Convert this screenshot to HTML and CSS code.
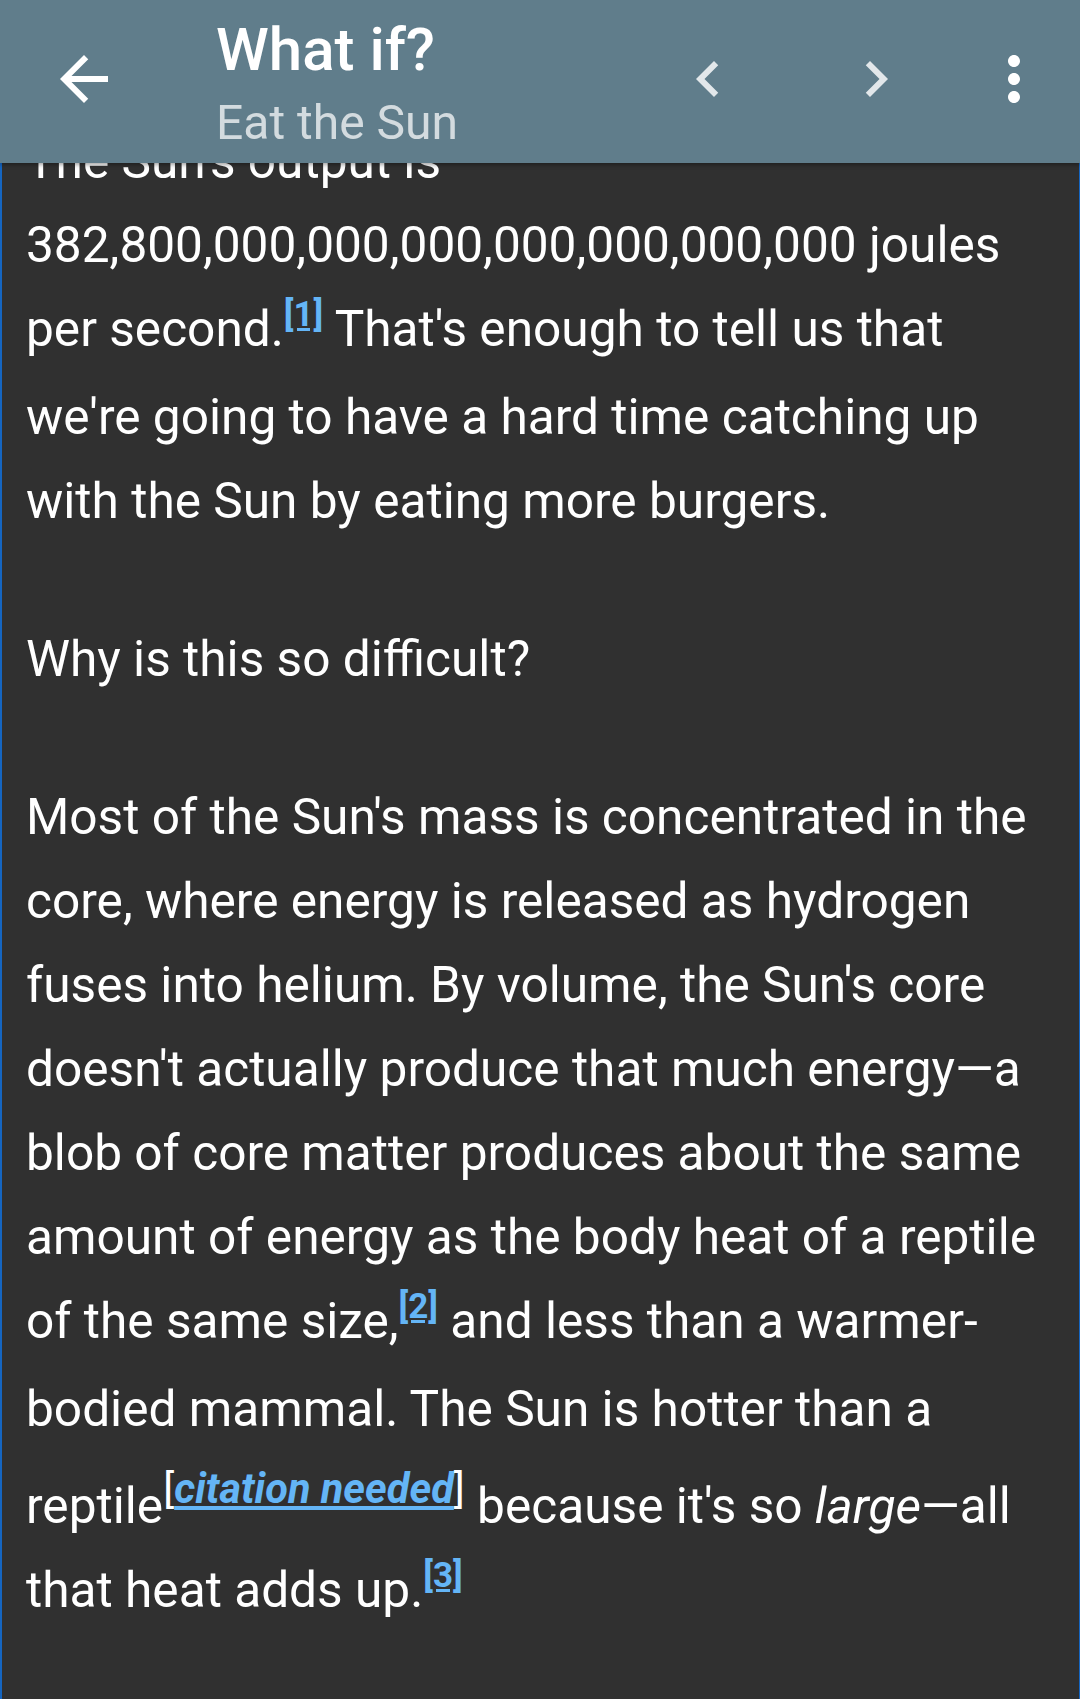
FILE: index.html
```html
<!DOCTYPE html>
<html lang="en">
<head>
<meta charset="utf-8">
<title>What if? - Eat the Sun</title>
<link rel="stylesheet" href="styles.css">
</head>
<body>
<header class="appbar">
  <button class="icon-btn back" aria-label="Back">
    <svg viewBox="0 0 24 24"><path d="M20 11H7.83l5.59-5.59L12 4l-8 8 8 8 1.41-1.41L7.83 13H20v-2z"/></svg>
  </button>
  <div class="titles">
    <div class="title">What if?</div>
    <div class="subtitle">Eat the Sun</div>
  </div>
  <button class="icon-btn nav" aria-label="Previous">
    <svg viewBox="0 0 24 24"><path d="M15.41 7.41L14 6l-6 6 6 6 1.41-1.41L10.83 12z"/></svg>
  </button>
  <button class="icon-btn nav" aria-label="Next">
    <svg viewBox="0 0 24 24"><path d="M10 6L8.59 7.41 13.17 12l-4.58 4.59L10 18l6-6z"/></svg>
  </button>
  <button class="icon-btn more" aria-label="More options">
    <svg viewBox="0 0 24 24"><path d="M12 8c1.1 0 2-.9 2-2s-.9-2-2-2-2 .9-2 2 .9 2 2 2zm0 2c-1.1 0-2 .9-2 2s.9 2 2 2 2-.9 2-2-.9-2-2-2zm0 6c-1.1 0-2 .9-2 2s.9 2 2 2 2-.9 2-2-.9-2-2-2z"/></svg>
  </button>
</header>
<main class="article">
  <p>The Sun's output is 382,800,000,000,000,000,000,000,000 joules per second.<sup class="ref"><a href="#r1">[1]</a></sup> That's enough to tell us that we're going to have a hard time catching up with the Sun by eating more burgers.</p>
  <p>Why is this so difficult?</p>
  <p>Most of the Sun's mass is concentrated in the core, where energy is released as hydrogen fuses into helium. By volume, the Sun's core doesn't actually produce that much energy—a blob of core matter produces about the same amount of energy as the body heat of a reptile of the same size,<sup class="ref"><a href="#r2">[2]</a></sup> and less than a warmer-bodied mammal. The Sun is hotter than a reptile<sup class="cite">[<i><a href="#cn">citation needed</a></i>]</sup> because it's so <i>large</i>—all that heat adds up.<sup class="ref"><a href="#r3">[3]</a></sup></p>
</main>
</body>
</html>
```
FILE: styles.css
```css
* { box-sizing: border-box; }
html, body { margin: 0; padding: 0; }
body {
  background: #303030;
  font-family: Roboto, "Noto Sans", sans-serif;
  color: #ffffff;
}
.appbar {
  position: fixed;
  top: 0;
  left: 0;
  right: 0;
  height: 163px;
  background: #607d8b;
  display: flex;
  align-items: flex-start;
  padding-left: 48px;
  box-shadow: 0 2px 4px rgba(0, 0, 0, 0.35);
  z-index: 10;
}
.icon-btn {
  background: none;
  border: 0;
  padding: 0;
  margin-top: 43px;
  height: 72px;
  display: flex;
  justify-content: center;
  align-items: center;
}
.icon-btn svg { width: 72px; height: 72px; display: block; }
.back { width: 72px; fill: #ffffff; }
.titles {
  flex: 1;
  padding-top: 20px;
  margin-left: 96px;
}
.title {
  font-size: 60px;
  line-height: 60px;
  font-weight: 500;
  color: #ffffff;
}
.subtitle {
  font-size: 48px;
  line-height: 48px;
  margin-top: 19px;
  color: rgba(255, 255, 255, 0.72);
}
.nav { width: 168px; fill: rgba(255, 255, 255, 0.82); }
.more { width: 108px; fill: #ffffff; margin-right: 12px; }

.article {
  border-left: 2px solid #1565c0;
  border-right: 1px solid #1565c0;
  min-height: 100vh;
  padding: 119px 25px 40px 24px;
  font-size: 49.6px;
  line-height: 84px;
}
.article p { margin: 0 0 74px; }
.ref {
  display: inline-block;
  font-size: 35px;
  font-weight: 700;
  line-height: 35px;
  vertical-align: 20px;
  margin: 0 0 43px 0;
}
.ref a, .cite a {
  color: #64b5f6;
  text-decoration: underline;
}
.cite {
  font-size: 41.5px;
  vertical-align: 20px;
  line-height: 76px;
}
.cite a { font-weight: 700; }
```
